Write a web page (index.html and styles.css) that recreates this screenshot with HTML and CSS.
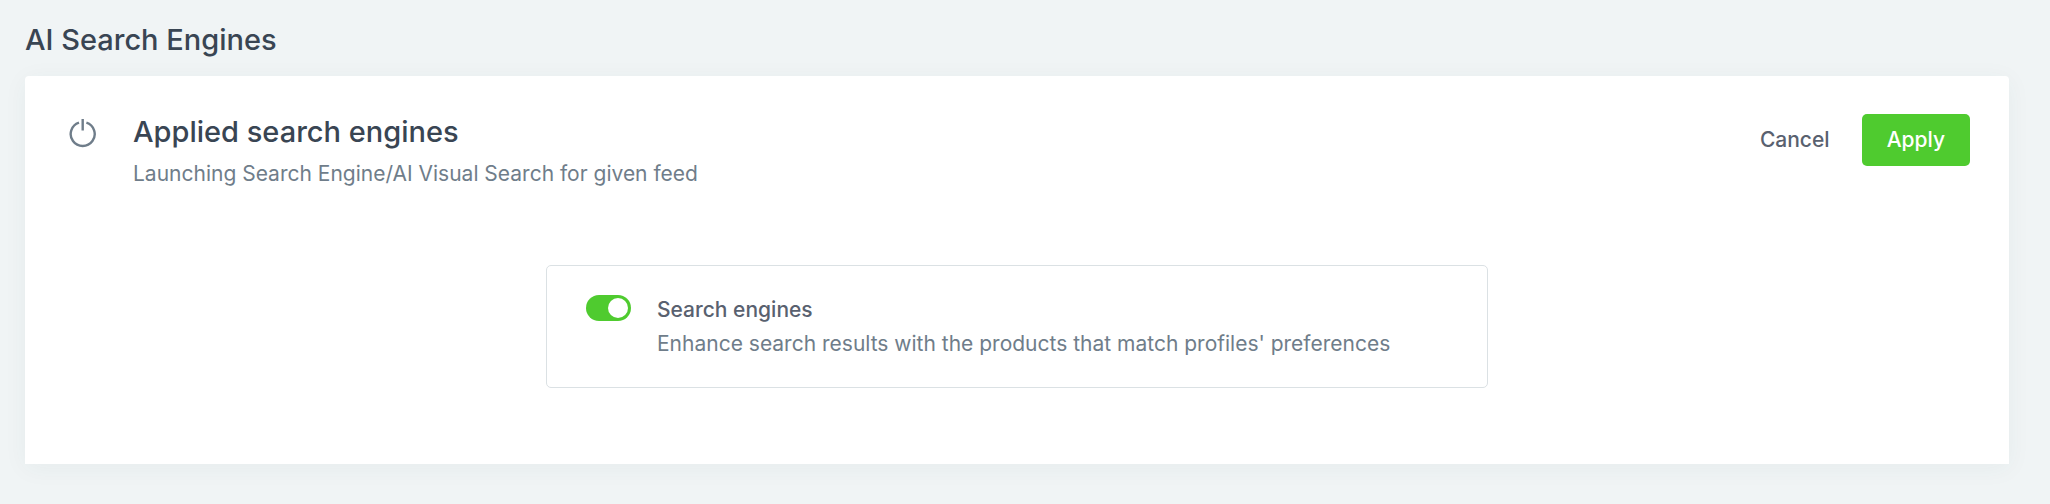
FILE: index.html
```html
<!DOCTYPE html>
<html lang="en">
<head>
<meta charset="utf-8">
<meta name="viewport" content="width=device-width, initial-scale=1">
<title>AI Search Engines</title>
<link rel="stylesheet" href="styles.css">
</head>
<body>
<main class="page">
  <h1 class="title">AI Search Engines</h1>
  <section class="panel">
    <header class="panel-header">
      <svg class="power-icon" viewBox="0 0 28 30" fill="none" stroke="currentColor" stroke-width="2.4" aria-hidden="true">
        <path d="M13.700 1v11.500M10 4.600a12 12 0 1 0 7.400 0"/>
      </svg>
      <div class="intro">
        <h2 class="title">Applied search engines</h2>
        <p class="text">Launching Search Engine/AI Visual Search for given feed</p>
      </div>
      <div class="actions">
        <button type="button" class="button">Cancel</button>
        <button type="button" class="button button-primary">Apply</button>
      </div>
    </header>
    <div class="option">
      <input type="checkbox" role="switch" class="switch" id="engines" aria-describedby="engines-text" checked>
      <div class="option-body">
        <label class="option-label" for="engines">Search engines</label>
        <p class="text" id="engines-text">Enhance search results with the products that match profiles' preferences</p>
      </div>
    </div>
  </section>
</main>
</body>
</html>
```
FILE: styles.css
```css
* {
  box-sizing: border-box;
}

body {
  margin: 0;
  background: #f0f4f5;
  color: #6f7d8a;
  font-family: Inter, "Liberation Sans", sans-serif;
  font-size: 21px;
  line-height: 32px;
}

h1, h2, p {
  margin: 0;
}

.page {
  padding: 20px 41px 40px 25px;
}

.title {
  color: #394553;
  font-size: 29px;
  font-weight: 500;
  line-height: 40px;
}

.panel {
  margin-top: 16px;
  padding: 36px 39px 76px;
  background: #fff;
  border-radius: 4px 4px 0 0;
  box-shadow: 0 4px 24px rgba(40, 70, 80, 0.05);
}

.panel-header {
  display: flex;
  align-items: flex-start;
  padding-left: 5px;
}

.power-icon {
  flex: none;
  width: 28px;
  height: 30px;
  margin: 6px 36px 0 0;
  color: #6f7d8a;
}

.intro {
  flex: 1;
}

.intro .text {
  margin-top: 6px;
}

.actions {
  display: flex;
  gap: 7px;
  padding-top: 2px;
}

.button {
  height: 52px;
  padding: 0 25px;
  border: 0;
  border-radius: 5px;
  background: none;
  color: #59616f;
  font: inherit;
  font-weight: 500;
}

.button-primary {
  background: #4fcb2f;
  color: #fff;
}

.option {
  display: flex;
  align-items: flex-start;
  gap: 26px;
  max-width: 942px;
  margin: 75px auto 0;
  padding: 28px 39px 27px;
  border: 1px solid #dbe1e4;
  border-radius: 5px;
}

.switch {
  appearance: none;
  flex: none;
  display: flex;
  align-items: center;
  width: 45px;
  height: 26px;
  margin: 1px 0 0;
  padding: 0 3px;
  border-radius: 13px;
  background: #9aa5ae;
}

.switch::before {
  content: "";
  width: 20px;
  height: 20px;
  border-radius: 50%;
  background: #fff;
}

.switch:checked {
  justify-content: flex-end;
  background: #4fcb2f;
}

.option-label {
  display: block;
  color: #59616f;
  font-weight: 500;
}

.option-body .text {
  margin-top: 2px;
}
```
